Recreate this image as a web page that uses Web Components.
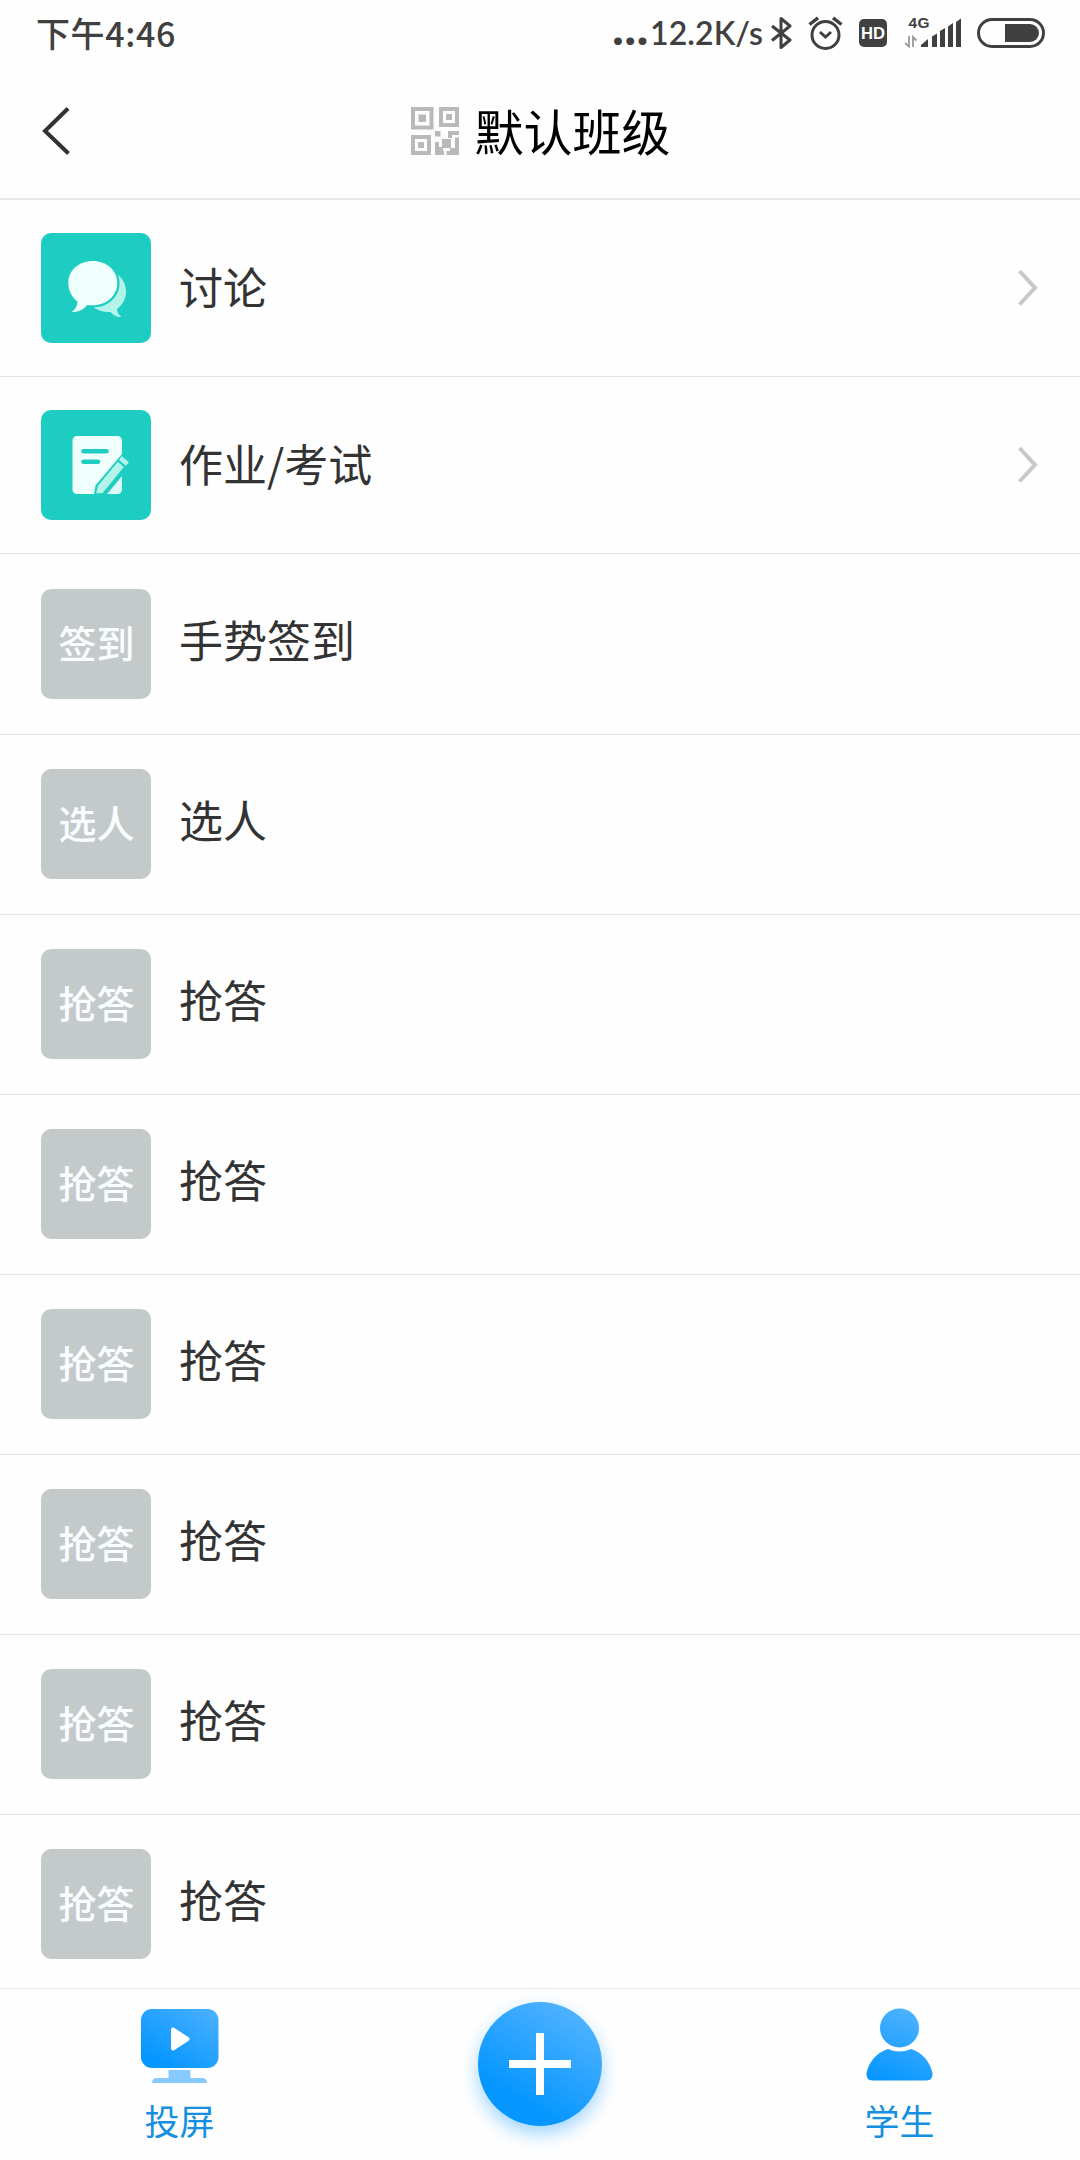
<!DOCTYPE html>
<html lang="zh-CN">
<head>
<meta charset="utf-8">
<meta name="viewport" content="width=device-width, initial-scale=1">
<title>默认班级</title>
<style>
  html, body {
    margin: 0;
    height: 100%;
  }

  body {
    background: #fefefe;
    color: #333;
    font-family: "Noto Sans CJK SC", "Noto Sans", sans-serif;
  }
</style>
</head>
<body>
<class-screen>
  <status-bar slot="status" time="下午4:46" speed="12.2K/s"></status-bar>
  <nav-header slot="header">默认班级</nav-header>

  <activity-row link icon="chat">讨论</activity-row>
  <activity-row link icon="paper">作业/考试</activity-row>
  <activity-row tile="签到" class="first">手势签到</activity-row>
  <activity-row tile="选人">选人</activity-row>
  <activity-row tile="抢答">抢答</activity-row>
  <activity-row tile="抢答">抢答</activity-row>
  <activity-row tile="抢答">抢答</activity-row>
  <activity-row tile="抢答">抢答</activity-row>
  <activity-row tile="抢答">抢答</activity-row>
  <activity-row tile="抢答">抢答</activity-row>

  <tab-bar slot="tabs">
    <tab-item icon="screen">投屏</tab-item>
    <add-button></add-button>
    <tab-item icon="student">学生</tab-item>
  </tab-bar>
</class-screen>

<script>
  // Clone a template string into an open shadow root
  function render(host, html) {
    const tmpl = document.createElement('template');
    tmpl.innerHTML = html;
    host.attachShadow({ mode: 'open' });
    host.shadowRoot.appendChild(tmpl.content.cloneNode(true));
  }

  class ClassScreen extends HTMLElement {
    constructor() {
      super();
      render(this, `
        <style>
          :host {
            display: flex;
            flex-direction: column;
            width: 1080px;
            height: 2160px;
            overflow: hidden;
          }

          main {
            flex: 1;
            min-height: 0;
            overflow: hidden;
          }
        </style>
        <slot name="status"></slot>
        <slot name="header"></slot>
        <main><slot></slot></main>
        <slot name="tabs"></slot>
      `);
    }
  }

  class StatusBar extends HTMLElement {
    constructor() {
      super();
      render(this, `
        <style>
          :host {
            display: flex;
            flex: none;
            align-items: center;
            box-sizing: border-box;
            height: 66px;
            padding: 0 35px 0 36px;
            color: #404040;
          }

          .time {
            flex: 1;
            font-size: 34px;
            font-weight: 500;
            line-height: 66px;
            letter-spacing: 0.6px;
          }

          .net {
            display: flex;
            align-items: baseline;
            margin-right: 8px;
            font-family: Lato, "Noto Sans", sans-serif;
            font-size: 32px;
            font-weight: 600;
            line-height: 66px;
            letter-spacing: 0.1px;
          }

          .dots {
            margin-right: 1px;
            font-size: 48px;
            font-weight: 900;
            line-height: 44px;
            letter-spacing: 0.8px;
          }

          svg {
            display: block;
            flex: none;
          }

          text {
            font-family: "Liberation Sans", sans-serif;
            font-weight: bold;
          }
        </style>
        <span class="time"></span>
        <span class="net"><span class="dots">...</span><span class="speed"></span></span>
        <svg width="21" height="34" viewBox="0 0 21 34" style="margin-right:16px" fill="none" stroke="#404040" stroke-width="3" stroke-linejoin="round">
          <path d="M1 10 19 24 10 31.5V2.5L19 10 1 24.5"/>
        </svg>
        <svg width="35" height="34" viewBox="0 0 35 34" style="margin-right:16px" fill="none" stroke="#404040" stroke-width="3">
          <circle cx="17.5" cy="19" r="13.5"/>
          <path d="M1.5 8.5 10 1.8M33.5 8.5 25 1.8" stroke-width="3.4"/>
          <path d="M12 16 17.5 21 23 16"/>
        </svg>
        <svg width="28" height="28" viewBox="0 0 28 28" style="margin-right:17px">
          <rect width="28" height="28" rx="5" fill="#404040"/>
          <text x="14" y="20.3" font-size="17" text-anchor="middle" textLength="24" lengthAdjust="spacingAndGlyphs" fill="#fff">HD</text>
        </svg>
        <svg width="57" height="42" viewBox="0 -4 57 42" style="margin-right:16px" fill="#404040">
          <text x="4.5" y="12" font-size="15.5" textLength="21">4G</text>
          <path d="M5 20v10.500L1 27M9 31V21l3.500 3.500" fill="none" stroke="#999" stroke-width="1.800"/>
          <path d="M17 31v-2l7-6v8zM28 20.500l5-3V31h-5zM36 15l5-3V31h-5zM44 10.500l5-3.500V31h-5zM52 6l5-3.500V31h-5z"/>
        </svg>
        <svg width="68" height="30" viewBox="0 0 68 30">
          <rect x="1.500" y="1.500" width="65" height="27" rx="13.500" fill="none" stroke="#404040" stroke-width="3"/>
          <path d="M28 6h25a9 9 0 0 1 0 18H28z" fill="#404040"/>
        </svg>
      `);
    }

    connectedCallback() {
      this.shadowRoot.querySelector('.time').textContent = this.getAttribute('time');
      this.shadowRoot.querySelector('.speed').textContent = this.getAttribute('speed');
    }
  }

  class NavHeader extends HTMLElement {
    constructor() {
      super();
      render(this, `
        <style>
          :host {
            display: grid;
            flex: none;
            grid-template-columns: 121px 1fr 119px;
            align-items: center;
            box-sizing: border-box;
            height: 134px;
            padding-bottom: 2px;
            border-bottom: 2px solid #e8e8e8;
          }

          .back {
            margin-left: 42px;
          }

          .title {
            display: flex;
            align-items: center;
            justify-content: center;
            gap: 15px;
            color: #000;
            font-size: 49px;
            line-height: 60px;
          }

          .name {
            padding-bottom: 2px;
          }

          svg {
            display: block;
          }
        </style>
        <svg class="back" width="28" height="48" viewBox="0 0 28 48" fill="none" stroke="#333" stroke-width="4">
          <path d="M26 1.500 3 24 26.500 46.500"/>
        </svg>
        <div class="title">
          <svg width="48" height="48" viewBox="0 0 48 48" fill="#b9b9b9">
            <g fill="none" stroke="#b9b9b9" stroke-width="4">
              <path d="M2 2h18.500v18.500H2zM30 2h16v16H30zM2 30h16v16H2z"/>
            </g>
            <path d="M7.500 7.500h7.500v7.500H7.500zM35 7h6v6h-6zM7 35h6v6H7z"/>
            <path d="M24 24h5.500v5.500H24zM37 24h11v4h-7v3h-4zM31 32h9v9h-9z"/>
            <path d="M24 35h4v5h4v4h1v4h-9zM44 30.500h4V48H35.500v-4H39v-3h5z"/>
          </svg>
          <span class="name"><slot></slot></span>
        </div>
      `);
    }
  }

  const rowIcons = {
    chat: `
      <svg width="110" height="110" viewBox="0 0 110 110">
        <path d="M76 41c12 9 12 26 0 35 0 3 1.500 5.500 4.500 8-5 0-8.500-2-11-5-6 .5-12-1-17.500-5z" fill="#b4f3e9"/>
        <path d="M51.800 28c14 0 24.500 9.500 24.500 22S65.800 72.300 51.800 72.300c-2 0-4 0-5.500-.3-3.500 4.500-8.500 7-15.300 7 3.500-3 5.500-6 5.500-10.500C30.500 64 27.300 57 27.300 50c0-12.500 10.500-22 24.500-22z" fill="#effffc" stroke="#1ecdc2" stroke-width="4.500" paint-order="stroke"/>
      </svg>`,
    paper: `
      <svg width="110" height="110" viewBox="0 0 110 110">
        <path d="M36 26h40.500a4.500 4.500 0 0 1 4.500 4.500V44L54.500 75.500 53 84H36a4.500 4.500 0 0 1-4.500-4.500v-49A4.500 4.500 0 0 1 36 26z" fill="#effffc"/>
        <path d="M42.500 41.200h23M42.500 51.800h14.500" stroke="#1ecdc2" stroke-width="4.600" stroke-linecap="round"/>
        <path d="M76.800 51.700 82.800 57 61.500 83.300H55.200L56.800 76z" fill="#b4f3e9"/>
        <path d="M80.700 46.700 87.300 52.200 85 55.500 78.500 50z" fill="#b4f3e9" stroke="#b4f3e9" stroke-width="1" stroke-linejoin="round"/>
        <path d="M81 66v13.500a4.500 4.500 0 0 1-4.500 4.500H66z" fill="#dcfaf6"/>
      </svg>`
  };

  class ActivityRow extends HTMLElement {
    constructor() {
      super();
      render(this, `
        <style>
          :host {
            display: flex;
            align-items: center;
            box-sizing: border-box;
            height: 180px;
            padding: 0 42px 2px 41px;
            border-bottom: 1px solid #e4e4e4;
          }

          :host([link]) {
            height: 177px;
            padding-bottom: 0;
          }

          :host(.first) {
            height: 181px;
            padding-bottom: 0;
          }

          :host(:last-of-type) {
            border-bottom-color: transparent;
          }

          .tile {
            display: flex;
            flex: none;
            align-items: center;
            justify-content: center;
            box-sizing: border-box;
            width: 110px;
            height: 110px;
            padding: 0 0 4px 1px;
            border-radius: 10px;
            background: #c4caca;
            color: #fafdff;
            font-size: 38px;
            font-weight: 500;
            line-height: 54px;
          }

          :host([link]) .tile {
            padding: 0;
            background: #1ecdc2;
          }

          .label {
            flex: 1;
            margin-left: 28px;
            padding-bottom: 9px;
            font-size: 44px;
            line-height: 60px;
          }

          :host([link]) .label {
            padding-bottom: 4px;
          }

          :host(.first) .label {
            padding-bottom: 11px;
          }

          .arrow {
            display: none;
          }

          :host([link]) .arrow {
            display: block;
          }
        </style>
        <span class="tile"></span>
        <span class="label"><slot></slot></span>
        <svg class="arrow" width="20" height="38" viewBox="0 0 20 38" fill="none" stroke="#c8c8c8" stroke-width="4">
          <path d="M1.500 2 17 18.800 1.500 35.500"/>
        </svg>
      `);
    }

    connectedCallback() {
      const tile = this.shadowRoot.querySelector('.tile');
      const icon = this.getAttribute('icon');

      if (icon) {
        tile.innerHTML = rowIcons[icon];
      } else {
        tile.textContent = this.getAttribute('tile');
      }
    }
  }

  class TabBar extends HTMLElement {
    constructor() {
      super();
      render(this, `
        <style>
          :host {
            display: grid;
            flex: none;
            grid-template-columns: repeat(3, 1fr);
            box-sizing: border-box;
            height: 172px;
            border-top: 1px solid #e8e8e8;
            background: #fefefe;
          }
        </style>
        <slot></slot>
      `);
    }
  }

  const tabIcons = {
    screen: `
      <svg width="80" height="78" viewBox="0 0 80 78">
        <defs>
          <linearGradient id="g" x1=".2" y1=".9" x2="1" y2="0">
            <stop offset="0" stop-color="#0596ff"/>
            <stop offset="1" stop-color="#4db1ff"/>
          </linearGradient>
        </defs>
        <rect x="1" y="1" width="77.500" height="59" rx="11" fill="url(#g)"/>
        <path d="M33 21.500 47.500 31 33 40.500z" fill="#fff" stroke="#fff" stroke-width="4" stroke-linejoin="round"/>
        <path d="M28.500 62h22v8h11.500q5 0 5 5H12q0-5 5-5h11.500z" fill="#86caff"/>
      </svg>`,
    student: `
      <svg width="80" height="78" viewBox="0 0 80 78">
        <defs>
          <linearGradient id="g" gradientUnits="userSpaceOnUse" x1="22" y1="74" x2="54" y2="0">
            <stop offset="0" stop-color="#0596ff"/>
            <stop offset="1" stop-color="#50b3ff"/>
          </linearGradient>
        </defs>
        <g fill="url(#g)">
          <circle cx="39.500" cy="20" r="19.500"/>
          <path d="M28 41q11.500 5 23 0C63.500 44.500 70.500 55.500 72.500 65q.5 7.500-6 7.500H12.500q-6.500 0-6-7.500C8.500 55.500 15.500 44.500 28 41z"/>
        </g>
      </svg>`
  };

  class TabItem extends HTMLElement {
    constructor() {
      super();
      render(this, `
        <style>
          :host {
            display: flex;
            flex-direction: column;
            align-items: center;
            padding-top: 19px;
            color: #158fe2;
            font-size: 35px;
            line-height: 50px;
          }

          .icon {
            height: 78px;
            margin-bottom: 9px;
          }

          .text {
            margin-right: 1px;
          }

          svg {
            display: block;
          }
        </style>
        <span class="icon"></span>
        <span class="text"><slot></slot></span>
      `);
    }

    connectedCallback() {
      this.shadowRoot.querySelector('.icon').innerHTML = tabIcons[this.getAttribute('icon')];
    }
  }

  class AddButton extends HTMLElement {
    constructor() {
      super();
      render(this, `
        <style>
          :host {
            display: flex;
            justify-content: center;
            padding-top: 13px;
          }

          button {
            display: flex;
            align-items: center;
            justify-content: center;
            width: 124px;
            height: 124px;
            padding: 0;
            border: 0;
            border-radius: 50%;
            background: linear-gradient(32deg, #0596ff 25%, #4db1ff 85%);
            box-shadow: 0 8px 18px rgba(30, 160, 255, 0.42);
          }
        </style>
        <button aria-label="add">
          <svg width="62" height="62" viewBox="0 0 62 62" stroke="#fff" stroke-width="8">
            <path d="M31 0v62M0 31h62"/>
          </svg>
        </button>
      `);
    }
  }

  window.customElements.define('class-screen', ClassScreen);
  window.customElements.define('status-bar', StatusBar);
  window.customElements.define('nav-header', NavHeader);
  window.customElements.define('activity-row', ActivityRow);
  window.customElements.define('tab-bar', TabBar);
  window.customElements.define('tab-item', TabItem);
  window.customElements.define('add-button', AddButton);
</script>
</body>
</html>
